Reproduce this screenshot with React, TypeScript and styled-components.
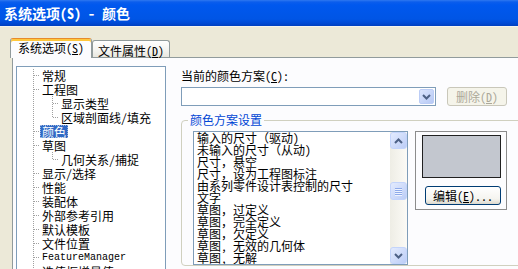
import React from 'react';
import styled, {createGlobalStyle, css} from 'styled-components';

const GlobalStyle = createGlobalStyle`
  html, body {
    margin: 0;
    padding: 0;
  }
  body {
    width: 518px;
    height: 269px;
    overflow: hidden;
    background: #ece9d8;
    font-family: "Noto Sans Mono CJK SC", "Noto Sans CJK SC", sans-serif;
    font-size: 12px;
    color: #000;
  }
  ul {
    list-style: none;
    margin: 0;
    padding: 0;
  }
`;

const Window = styled.div`
  width: 518px;
  height: 269px;
  display: flex;
  flex-direction: column;
  overflow: hidden;
`;

const TitleBar = styled.div`
  flex: none;
  height: 26px;
  display: flex;
  align-items: center;
  padding-left: 4px;
  background: linear-gradient(#2f78f0 0, #0b5dec 2px, #0058ee 5px, #0055e5 19px, #004ad6 23px, #003fbf 26px);
  border-bottom: 1px solid #f4f3ee;
  color: #fff;
  font-weight: bold;
  font-size: 14px;
  white-space: pre;
`;

const Body = styled.div`
  flex: 1;
  min-height: 0;
  display: flex;
  flex-direction: column;
  padding: 11px 0 0 10px;
`;

const TabStrip = styled.div`
  display: flex;
  align-items: flex-end;
  height: 19px;
  position: relative;
  z-index: 1;
`;

const Tab = styled.div<{$active?: boolean}>`
  box-sizing: border-box;
  display: flex;
  align-items: center;
  white-space: nowrap;
  border: 1px solid #919b9c;
  border-bottom: none;
  border-radius: 3px 3px 0 0;
  ${p => p.$active ? css`
    height: 20px;
    margin-bottom: -1px;
    padding: 0 7px 2px;
    background: #fcfcfe;
    border-top: 1px solid #e68b2c;
    box-shadow: inset 0 2px #ffc73c;
  ` : css`
    height: 17px;
    padding: 2px 5px 0;
    background: linear-gradient(#fff, #f3f3ef 60%, #e8e7e0);
  `}
`;

const Key = styled.span`
  text-decoration: underline;
`;

const Panel = styled.div`
  flex: 1;
  display: flex;
  align-items: flex-start;
  margin: 0 -12px -12px 2px;
  padding: 8px 0 0 3px;
  border: 1px solid #919b9c;
  background: #fcfcfe;
`;

const TreeBox = styled.div`
  flex: none;
  box-sizing: border-box;
  width: 150px;
  height: 230px;
  padding-top: 1px;
  border: 1px solid #7f9db9;
  background: #fff;
  overflow: hidden;
`;

const TreeList = styled.ul`
  background-image: linear-gradient(#a0a0a0 50%, transparent 50%);
  background-size: 1px 2px;
  background-repeat: repeat-y;
  background-position: 16px 7px;
`;

const Row = styled.div<{$level: number}>`
  position: relative;
  height: 14px;
  display: flex;
  align-items: center;
  padding-left: ${p => 23 + p.$level * 19}px;
  &::before {
    content: '';
    position: absolute;
    left: ${p => 17 + p.$level * 19}px;
    top: 7px;
    width: 6px;
    height: 1px;
    background: linear-gradient(to right, #a0a0a0 50%, transparent 50%);
    background-size: 2px 1px;
  }
  ${p => p.$level > 0 && css`
    &::after {
      content: '';
      position: absolute;
      left: ${16 + p.$level * 19}px;
      top: 0;
      width: 1px;
      height: 14px;
      background: linear-gradient(#a0a0a0 50%, transparent 50%);
      background-size: 1px 2px;
    }
  `}
`;

const SubList = styled.ul`
  li:last-child > div::after {
    height: 8px;
  }
`;

const Label = styled.span<{$selected?: boolean; $mono?: boolean}>`
  padding: 0 2px;
  height: 13px;
  line-height: 13px;
  white-space: nowrap;
  ${p => p.$mono && css`
    font-family: "Liberation Mono", monospace;
    font-size: 10px;
  `}
  ${p => p.$selected && css`
    background: #316ac5;
    color: #fff;
    outline: 1px dotted #9fb6e0;
    outline-offset: -1px;
  `}
`;

const Side = styled.div`
  flex: 1;
  display: flex;
  flex-direction: column;
  margin-left: 15px;
  padding-top: 3px;
`;

const FieldLabel = styled.div`
  line-height: 14px;
  height: 14px;
  white-space: nowrap;
`;

const ComboRow = styled.div`
  display: flex;
  margin-top: 4px;
`;

const Combo = styled.div`
  box-sizing: border-box;
  width: 255px;
  height: 19px;
  padding: 1px;
  display: flex;
  justify-content: flex-end;
  border: 1px solid #7f9db9;
  background: #fff;
`;

const DropButton = styled.div`
  box-sizing: border-box;
  width: 15px;
  height: 15px;
  display: flex;
  align-items: center;
  justify-content: center;
  border: 1px solid #bccdf6;
  border-radius: 2px;
  background: linear-gradient(135deg, #dbe5fd, #b7c9f5);
`;

const PushButton = styled.div<{$disabled?: boolean; $width: number}>`
  box-sizing: border-box;
  width: ${p => p.$width}px;
  height: 19px;
  display: flex;
  align-items: center;
  justify-content: center;
  border-radius: 3px;
  white-space: nowrap;
  ${p => p.$disabled ? css`
    border: 1px solid #c9c7ba;
    background: #f5f4ea;
    color: #aca899;
  ` : css`
    border: 1px solid #003c74;
    background: linear-gradient(#ffffff, #f5f4ef 70%, #dcd8cd);
    color: #000;
  `}
`;

const DeleteButton = styled(PushButton)`
  margin-left: 11px;
`;

const Group = styled.fieldset`
  width: 360px;
  margin: 8px 0 0;
  padding: 5px 0 0 11px;
  border: 1px solid #d0d0bf;
  border-radius: 4px;
`;

const GroupTitle = styled.legend`
  margin-left: -5px;
  padding: 0 2px;
  height: 12px;
  line-height: 12px;
  color: #0046d5;
`;

const GroupBody = styled.div`
  display: flex;
  align-items: flex-start;
  gap: 7px;
`;

const ListBox = styled.div`
  box-sizing: border-box;
  width: 215px;
  height: 134px;
  display: flex;
  border: 1px solid #7f9db9;
  background: #fff;
`;

const ListItems = styled.ul`
  flex: 1;
  padding-left: 3px;
  overflow: hidden;
  li {
    height: 12px;
    line-height: 12px;
    white-space: nowrap;
  }
`;

const ScrollBar = styled.div`
  flex: none;
  width: 17px;
  display: flex;
  flex-direction: column;
  background: linear-gradient(to right, #eeede5, #fbfaf6);
`;

const ScrollButton = styled.div`
  box-sizing: border-box;
  height: 17px;
  display: flex;
  align-items: center;
  justify-content: center;
  border: 1px solid #c3d4fb;
  border-radius: 3px;
  background: linear-gradient(135deg, #e3ebfe, #bccdf6);
`;

const Thumb = styled(ScrollButton)`
  height: 18px;
  margin-top: 33px;
  flex-direction: column;
  gap: 1px;
  span {
    width: 7px;
    height: 1px;
    background: #8eaaea;
    box-shadow: 0 1px #eef3fe;
  }
`;

const Track = styled.div`
  flex: 1;
`;

const ColorFrame = styled.div`
  box-sizing: border-box;
  width: 92px;
  height: 79px;
  padding: 3px 0 0 6px;
  border: 1px solid #8c8c8c;
`;

const Swatch = styled.div`
  box-sizing: border-box;
  width: 79px;
  height: 43px;
  border: 1px solid #202020;
  background: #c3c7cf;
`;

const EditButton = styled(PushButton)`
  margin: 8px 0 0 3px;
`;

function Chevron({up}: {up?: boolean}) {
  return (
    <svg width="9" height="6" viewBox="0 0 9 6">
      <path d={up ? 'M1 5 L4.5 1.5 L8 5' : 'M1 1 L4.5 4.5 L8 1'} stroke="#4d6185" strokeWidth="2" fill="none"/>
    </svg>
  );
}

type TreeNode = {label: string; selected?: boolean; mono?: boolean; children?: string[]};

const tree: TreeNode[] = [
  {label: '常规'},
  {label: '工程图', children: ['显示类型', '区域剖面线/填充']},
  {label: '颜色', selected: true},
  {label: '草图', children: ['几何关系/捕捉']},
  {label: '显示/选择'},
  {label: '性能'},
  {label: '装配体'},
  {label: '外部参考引用'},
  {label: '默认模板'},
  {label: '文件位置'},
  {label: 'FeatureManager', mono: true},
  {label: '选值框增量值'},
];

const schemeItems = [
  '输入的尺寸（驱动)',
  '未输入的尺寸（从动)',
  '尺寸，悬空',
  '尺寸，设为工程图标注',
  '由系列零件设计表控制的尺寸',
  '文字',
  '草图，过定义',
  '草图，完全定义',
  '草图，欠定义',
  '草图, 无效的几何体',
  '草图, 无解',
];

export default function App() {
  return (
    <Window>
      <GlobalStyle/>
      <TitleBar>系统选项(S) - 颜色</TitleBar>
      <Body>
        <TabStrip>
          <Tab $active>系统选项(<Key>S</Key>)</Tab>
          <Tab>文件属性(<Key>D</Key>)</Tab>
        </TabStrip>
        <Panel>
          <TreeBox>
            <TreeList>
              {tree.map(node =>
                <li key={node.label}>
                  <Row $level={0}>
                    <Label $selected={node.selected} $mono={node.mono}>{node.label}</Label>
                  </Row>
                  {node.children &&
                    <SubList>
                      {node.children.map(child =>
                        <li key={child}>
                          <Row $level={1}><Label>{child}</Label></Row>
                        </li>
                      )}
                    </SubList>
                  }
                </li>
              )}
            </TreeList>
          </TreeBox>
          <Side>
            <FieldLabel>当前的颜色方案(<Key>C</Key>):</FieldLabel>
            <ComboRow>
              <Combo>
                <DropButton><Chevron/></DropButton>
              </Combo>
              <DeleteButton $disabled $width={60}>删除(<Key>D</Key>)</DeleteButton>
            </ComboRow>
            <Group>
              <GroupTitle>颜色方案设置</GroupTitle>
              <GroupBody>
                <ListBox>
                  <ListItems>
                    {schemeItems.map(item => <li key={item}>{item}</li>)}
                  </ListItems>
                  <ScrollBar>
                    <ScrollButton><Chevron up/></ScrollButton>
                    <Thumb><span/><span/><span/><span/></Thumb>
                    <Track/>
                    <ScrollButton><Chevron/></ScrollButton>
                  </ScrollBar>
                </ListBox>
                <ColorFrame>
                  <Swatch/>
                  <EditButton $width={76}>编辑(<Key>E</Key>)...</EditButton>
                </ColorFrame>
              </GroupBody>
            </Group>
          </Side>
        </Panel>
      </Body>
    </Window>
  );
}
